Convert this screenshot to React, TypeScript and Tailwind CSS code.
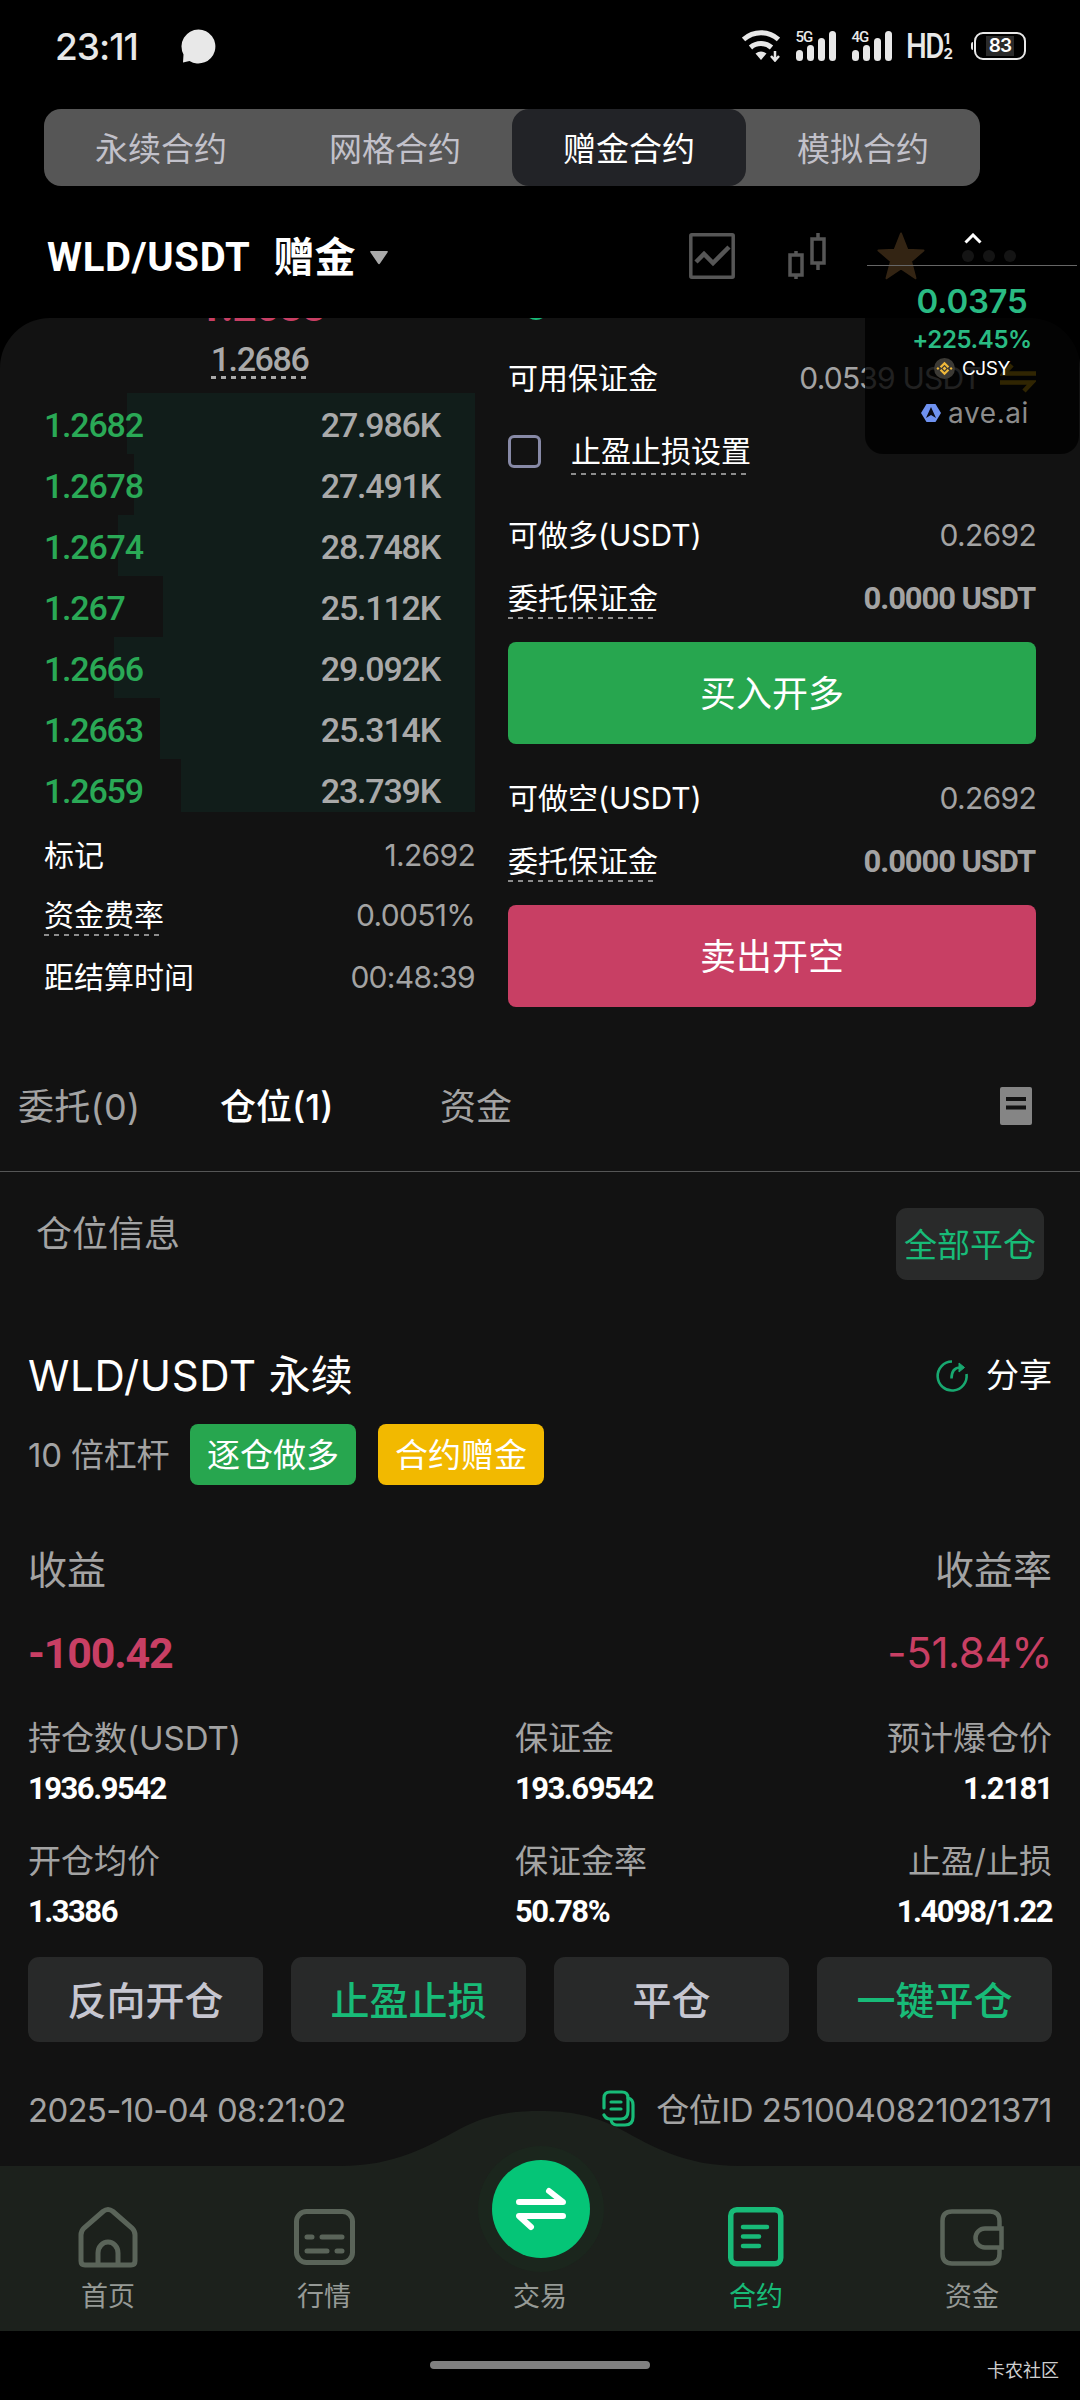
import { useState } from 'react'
import type { ReactNode } from 'react'

const modes = ['永续合约', '网格合约', '赠金合约', '模拟合约']

const bids = [
  { price: '1.2682', amount: '27.986K', bar: 348 },
  { price: '1.2678', amount: '27.491K', bar: 341 },
  { price: '1.2674', amount: '28.748K', bar: 357 },
  { price: '1.267', amount: '25.112K', bar: 312 },
  { price: '1.2666', amount: '29.092K', bar: 361 },
  { price: '1.2663', amount: '25.314K', bar: 315 },
  { price: '1.2659', amount: '23.739K', bar: 294 },
]

function StatusBar() {
  return (
    <div className="flex h-[109px] items-start justify-between pt-7 pr-[54px] pl-[55px] text-[#e8e8e8]">
      <div className="flex h-9 items-center">
        <span className="w-[126px] text-[37px] leading-none font-medium tracking-[-1px]">23:11</span>
        <svg width="35" height="35" viewBox="0 0 35 35" fill="currentColor">
          <path d="M17.5 .5a17 17 0 1 1-9 31.500L2 33.500l.5-8A17 17 0 0 1 17.500 .5z" />
        </svg>
      </div>
      <div className="flex h-9 items-center">
        <svg width="38" height="32" viewBox="0 0 38 32" fill="none" stroke="currentColor">
          <path d="M1.500 9.500a26 26 0 0 1 35 0" strokeWidth="5" />
          <path d="M8.500 17.500a16 16 0 0 1 21 0" strokeWidth="5" />
          <path d="M13.500 23.500q5.500-4 11 0L19 30z" fill="currentColor" stroke="none" />
          <path d="M33 21v8M29 26l4 4.500 4-4.500" strokeWidth="2.500" />
        </svg>
        <Signal label="5G" className="ml-4" />
        <Signal label="4G" className="ml-4" />
        <div className="ml-[14px] flex h-8 items-center">
          <span className="w-[38px] origin-left scale-x-[.84] font-[Roboto] text-[35px] leading-none font-medium tracking-[-2px]">
            HD
          </span>
          <span className="flex flex-col text-[15px] leading-[15px] font-bold">
            <span>1</span>
            <span>2</span>
          </span>
        </div>
        <span className="ml-[18px] h-2 w-[2px] rounded-l bg-current" />
        <div className="ml-[1px] flex h-7 w-[52px] items-center justify-center rounded-[9px] border-[2.5px] border-current">
          <span className="bg-[#2a2a2a] px-[3px] text-[19px] leading-[20px] font-semibold tracking-[-1px] text-white">83</span>
        </div>
      </div>
    </div>
  )
}

function Signal({ label, className }: { label: string; className: string }) {
  return (
    <div className={`relative h-[30px] w-10 ${className}`}>
      <span className="absolute top-0 left-0 font-[Roboto] text-[15px] leading-[12px] font-medium tracking-[-1px]">{label}</span>
      <svg width="40" height="30" viewBox="0 0 40 30" fill="currentColor">
        <rect x="0" y="19" width="7" height="11" rx="3.500" />
        <rect x="11" y="14" width="7" height="16" rx="3.500" />
        <rect x="22" y="7" width="7" height="23" rx="3.500" />
        <rect x="33" y="0" width="7" height="30" rx="3.500" />
      </svg>
    </div>
  )
}

function Header() {
  return (
    <div className="flex h-[132px] items-start justify-between pr-[64px] pl-[47px]">
      <div className="flex h-[143px] items-center text-white">
        <span className="font-[Roboto] text-[40px] leading-none font-bold tracking-[.7px]">WLD/USDT</span>
        <span className="ml-[23px] text-[41px] leading-none font-bold">赠金</span>
        <svg className="ml-[14px]" width="18" height="14" viewBox="0 0 18 14" fill="#a9a9a9">
          <path d="M1 0h16q1.500 0 .5 1.500l-7.500 11q-1 1.500-2 0L.5 1.500Q-.5 0 1 0z" />
        </svg>
      </div>
      <div className="flex h-[140px] items-center text-[#565656]">
        <svg width="46" height="46" viewBox="0 0 46 46" fill="none" stroke="currentColor" strokeWidth="3.500">
          <rect x="1.800" y="1.800" width="42.400" height="42.400" rx="1" />
          <path d="M7 29l8-8 9 9 16-16" strokeWidth="4.500" />
        </svg>
        <svg className="ml-[53px]" width="38" height="46" viewBox="0 0 38 46" fill="none" stroke="currentColor" strokeWidth="3.500">
          <rect x="2" y="22" width="12" height="20" />
          <path d="M8 18v4M8 42v4M30 0v6M30 30v7" />
          <rect x="24" y="6" width="12" height="24" />
        </svg>
        <svg className="ml-[51px]" width="48" height="48" viewBox="0 0 48 48" fill="#ffb45f" stroke="#ffb45f" strokeWidth="2" strokeLinejoin="round">
          <path d="M24 1.500l6.300 16.200 16.200.8-12.500 10.700 4.500 17L24 36.500 9.500 46.200l4.500-17L1.500 18.500l16.200-.8z" />
        </svg>
        <div className="ml-[37px] flex gap-[9px]">
          <span className="size-3 rounded-full bg-[#646464]" />
          <span className="size-3 rounded-full bg-[#646464]" />
          <span className="size-3 rounded-full bg-[#646464]" />
        </div>
      </div>
    </div>
  )
}

function Dashed({ children }: { children: ReactNode }) {
  return (
    <span className="relative">
      {children}
      <span className="absolute inset-x-0 -bottom-[6px] h-[2px] bg-[repeating-linear-gradient(90deg,#8c8c8c_0_5px,transparent_5px_10px)]" />
    </span>
  )
}

function InfoRow({ label, value, dashed, className }: { label: string; value: string; dashed?: boolean; className: string }) {
  return (
    <div className={`flex items-center justify-between text-[30px] leading-none text-white ${className}`}>
      {dashed ? <Dashed>{label}</Dashed> : <span>{label}</span>}
      <span className="tracking-[-.7px] text-[#a3a3a3]">{value}</span>
    </div>
  )
}

function OrderBook() {
  return (
    <div className="w-[431px]">
      <div className="flex h-[75px] flex-col items-center">
        <div className="flex h-[5px] items-end overflow-hidden">
          <span className="-mb-[5px] ml-1 font-[Roboto] text-[42px] leading-none font-bold tracking-[-1px] text-[#c83f64]">1.2688</span>
        </div>
        <span className="relative mt-[19px] font-[Roboto] text-[34px] leading-none font-medium tracking-[-1.4px] text-[#a9a9a9]">
          1.2686
          <span className="absolute inset-x-0 -bottom-[3px] h-[3px] bg-[repeating-linear-gradient(90deg,#a9a9a9_0_5px,transparent_5px_10px)]" />
        </span>
      </div>
      <div className="h-[419px] overflow-hidden">
        {bids.map((bid) => (
          <div key={bid.price} className="relative h-[61px] font-[Roboto] text-[34px] font-medium tracking-[-1.2px]">
            <div className="absolute inset-y-0 right-0 bg-[#111d1a]" style={{ width: bid.bar }} />
            <div className="relative flex h-[64px] items-center justify-between pr-[35px] leading-none">
              <span className="text-[#2aa956]">{bid.price}</span>
              <span className="text-[#a9a9a9]">{bid.amount}</span>
            </div>
          </div>
        ))}
      </div>
      <InfoRow label="标记" value="1.2692" className="mt-[13px] h-[60px]" />
      <InfoRow label="资金费率" value="0.0051%" dashed className="h-[60px]" />
      <InfoRow label="距结算时间" value="00:48:39" className="h-[63px]" />
    </div>
  )
}

function OrderForm() {
  return (
    <div className="ml-[33px] w-[528px]">
      <div className="h-[30px]">
        <div className="ml-4 h-[2px] w-6 overflow-hidden">
          <div className="-mt-[22px] size-6 rounded-full bg-[#18bb78]" />
        </div>
      </div>
      <div className="flex h-[60px] items-center text-[30px] leading-none text-white">
        <span>可用保证金</span>
        <span className="ml-auto tracking-[-.8px] text-[#a3a3a3]">0.0539 USDT</span>
        <svg className="ml-[19px]" width="36" height="30" viewBox="0 0 36 30" fill="none" stroke="#f0b90b" strokeWidth="4.500">
          <path d="M36 10.500H4L12 2M0 19.500h32L24 28" />
        </svg>
      </div>
      <div className="mt-[13px] flex h-[60px] items-center text-[30px] leading-none text-white">
        <span className="size-[33px] rounded-[6px] border-[3px] border-[#8789a6]" />
        <span className="ml-[30px]">
          <Dashed>止盈止损设置</Dashed>
        </span>
      </div>
      <InfoRow label="可做多(USDT)" value="0.2692" className="mt-[24px] h-[60px]" />
      <MarginRow />
      <button className="mt-[14px] flex h-[102px] w-full items-center justify-center rounded-[8px] bg-[#27a64f] pt-[2px] text-[36px] leading-none text-white">
        买入开多
      </button>
      <InfoRow label="可做空(USDT)" value="0.2692" className="mt-[24px] h-[60px]" />
      <MarginRow />
      <button className="mt-[14px] flex h-[102px] w-full items-center justify-center rounded-[8px] bg-[#c83f64] pt-[2px] text-[36px] leading-none text-white">
        卖出开空
      </button>
    </div>
  )
}

function MarginRow() {
  return (
    <div className="mt-[3px] flex h-[60px] items-center justify-between text-[30px] leading-none text-white">
      <Dashed>委托保证金</Dashed>
      <span className="mr-[1px] font-[Roboto] text-[31px] font-bold tracking-[-1.1px] text-[#a3a3a3]">0.0000 USDT</span>
    </div>
  )
}

function PositionTabs() {
  return (
    <div className="flex h-[132px] items-center border-b border-[#555656] pt-[2px] pr-12 pl-[18px] text-[36px] leading-none text-[#a3a3a3]">
      <span className="w-[202px] tracking-[.3px]">委托(0)</span>
      <span className="w-[220px] font-medium text-white">仓位(1)</span>
      <span>资金</span>
      <svg className="ml-auto -mt-[2px]" width="32" height="38" viewBox="0 0 32 38">
        <rect width="32" height="38" rx="2" fill="#858585" />
        <path d="M6 12h20M6 20.500h20" stroke="#121212" strokeWidth="4" />
      </svg>
    </div>
  )
}

function Stat({ label, value, className = '' }: { label: string; value: string; className?: string }) {
  return (
    <div className={`flex flex-col ${className}`}>
      <span className="flex h-[50px] items-center text-[33px] leading-none text-[#a3a3a3]">{label}</span>
      <span className="flex h-[50px] items-center font-[Roboto] text-[31px] leading-none font-bold tracking-[-1.5px] text-white">{value}</span>
    </div>
  )
}

function PositionCard() {
  return (
    <div className="px-7">
      <div className="flex h-[60px] items-center justify-between pt-[1px] leading-none text-white">
        <span className="text-[42px]">
          <span className="tracking-[.7px]">WLD/USDT</span> 永续
        </span>
        <div className="flex items-center text-[33px]">
          <svg className="mr-[17px]" width="34" height="34" viewBox="0 0 34 34" fill="none" stroke="#18a870" strokeWidth="2.600">
            <path d="M17 2.500A14.500 14.500 0 1 0 31.500 15" />
            <path d="M16.500 19.500c0-7 3-11 9-11" />
            <path d="M24 4l5.500 4.500L24 13z" fill="#18a870" strokeWidth="1" />
          </svg>
          <span>分享</span>
        </div>
      </div>
      <div className="mt-[19px] flex h-[61px] items-center text-[33px] leading-none text-white">
        <span className="w-[162px] pt-[1px] tracking-[-.2px] text-[#a3a3a3]">10 倍杠杆</span>
        <span className="flex h-[61px] w-[166px] items-center justify-center rounded-[8px] bg-[#27a64f] pt-[2px]">逐仓做多</span>
        <span className="ml-[22px] flex h-[61px] w-[166px] items-center justify-center rounded-[8px] bg-[#f2b900] pt-[2px]">合约赠金</span>
      </div>
      <div className="mt-[54px] flex h-[60px] items-center justify-between text-[39px] leading-none text-[#a3a3a3]">
        <span>收益</span>
        <span>收益率</span>
      </div>
      <div className="mt-[24px] flex h-[60px] items-center justify-between font-[Roboto] text-[43px] leading-none text-[#c83f64]">
        <span className="font-bold tracking-[-1.2px]">-100.42</span>
        <span className="font-[Inter] text-[42px] tracking-[-.4px]">-51.84%</span>
      </div>
      <div className="mt-[30px] grid grid-cols-[487px_1fr_auto]">
        <Stat label="持仓数(USDT)" value="1936.9542" />
        <Stat label="保证金" value="193.69542" />
        <Stat label="预计爆仓价" value="1.2181" className="items-end" />
      </div>
      <div className="mt-[23px] grid grid-cols-[487px_1fr_auto]">
        <Stat label="开仓均价" value="1.3386" />
        <Stat label="保证金率" value="50.78%" />
        <Stat label="止盈/止损" value="1.4098/1.22" className="items-end" />
      </div>
      <div className="mt-[21px] grid grid-cols-4 gap-7 text-[39px] leading-none font-medium text-[#c6c6d0]">
        <button className="h-[85px] rounded-[11px] bg-[#282929] pt-[2px]">反向开仓</button>
        <button className="h-[85px] rounded-[11px] bg-[#282929] pt-[2px] text-[#18bb78]">止盈止损</button>
        <button className="h-[85px] rounded-[11px] bg-[#282929] pt-[2px]">平仓</button>
        <button className="h-[85px] rounded-[11px] bg-[#282929] pt-[2px] text-[#18bb78]">一键平仓</button>
      </div>
      <div className="mt-[38px] flex h-[60px] items-center text-[33px] leading-none text-[#a3a3a3]">
        <span className="tracking-[-.75px]">2025-10-04 08:21:02</span>
        <svg className="-mt-1 ml-auto" width="33" height="37" viewBox="0 0 33 37" fill="none" stroke="#18bb78" strokeWidth="3.200" strokeLinecap="round">
          <path d="M2 18V8q0-6 6-6h12q6 0 6 6v13q0 8-7 8H8q-4 0-6-4" />
          <path d="M26 8q5 1 5 7v12q0 8-8 8h-8q-5 0-6-5" />
          <path d="M9 12h10M9 19h10" />
        </svg>
        <span className="ml-[21px] tracking-[-.5px]">仓位ID 2510040821021371</span>
      </div>
    </div>
  )
}

function NavItem({ label, active, children }: { label: string; active?: boolean; children: ReactNode }) {
  return (
    <div className={`flex flex-1 flex-col items-center ${active ? 'text-[#18bb78]' : 'text-[#5a6459]'}`}>
      <div className="mt-[40px] flex h-[62px] items-center">{children}</div>
      <span className={`mt-[15px] text-[27px] leading-none ${active ? '' : 'text-[#969a96]'}`}>{label}</span>
    </div>
  )
}

function BottomNav() {
  return (
    <div className="relative flex h-[165px] bg-[#1c211c]">
      <svg className="absolute -top-[56px] left-[340px]" width="400" height="57" viewBox="0 0 400 57" fill="#1c211c">
        <path d="M0 57V56C56 56 88 36 118 20 146 5 170 1 200 1s54 4 82 19c30 16 62 36 118 36v1z" />
      </svg>
      <NavItem label="首页">
        <svg width="60" height="62" viewBox="0 0 60 62" fill="none" stroke="currentColor" strokeWidth="5">
          <path d="M3 29q0-4 3-7L25 5.500q5-4 10 0L54 22q3 3 3 7v26q0 4-4 4H7q-4 0-4-4z" />
          <path d="M20 59V47a10 11 0 0 1 20 0v12" />
        </svg>
      </NavItem>
      <NavItem label="行情">
        <svg width="61" height="56" viewBox="0 0 61 56" fill="none" stroke="currentColor" strokeWidth="5">
          <rect x="2.500" y="2.500" width="56" height="51" rx="10" />
          <path d="M13 28h5M28 28h20M13 42h20M43 42h5" strokeLinecap="round" />
        </svg>
      </NavItem>
      <div className="relative flex flex-1 flex-col items-center">
        <div className="-mt-[20px] ml-[2px] flex size-[126px] shrink-0 items-center justify-center rounded-full bg-[#1b261d]">
          <div className="flex size-[98px] items-center justify-center rounded-full bg-[#05c577]">
            <svg width="52" height="46" viewBox="0 0 52 46" fill="none" stroke="#fff" strokeWidth="6" strokeLinecap="round" strokeLinejoin="round">
              <path d="M4 16h44L34 5M48 30H4l12 11" />
            </svg>
          </div>
        </div>
        <span className="mt-[11px] text-[27px] leading-none text-[#969a96]">交易</span>
      </div>
      <NavItem label="合约" active>
        <svg width="56" height="60" viewBox="0 0 56 60" fill="none" stroke="currentColor" strokeWidth="5.500">
          <rect x="2.750" y="2.750" width="50" height="54" rx="6" />
          <path d="M15 20h24M15 29.500h16M15 39h16" strokeWidth="4.500" strokeLinecap="round" />
        </svg>
      </NavItem>
      <NavItem label="资金">
        <svg width="64" height="57" viewBox="0 0 64 57" fill="none" stroke="currentColor" strokeWidth="4.500">
          <path d="M59.500 19v-7q0-9.500-9.500-9.500H12Q2.500 2.500 2.500 12v33q0 9.500 9.500 9.500h38q9.500 0 9.500-9.500v-6" />
          <path d="M61.500 19.500H45a9.500 9.500 0 0 0 0 19h16.500z" />
        </svg>
      </NavItem>
    </div>
  )
}

function PriceWidget() {
  return (
    <div className="absolute top-[225px] left-[865px] flex h-[229px] w-[214px] flex-col items-center rounded-[18px] bg-black/80">
      <svg className="mt-[8px] ml-[2px]" width="18" height="11" viewBox="0 0 18 11" fill="none" stroke="#fff" strokeWidth="3">
        <path d="M1.500 9.500L9 2l7.500 7.500" />
      </svg>
      <div className="mt-[21px] h-px w-[210px] bg-[#666]" />
      <span className="mt-[19px] text-[33px] leading-none font-semibold tracking-[-.3px] text-[#2abb83]">0.0375</span>
      <span className="mt-[10px] text-[24px] leading-none font-semibold tracking-[-.4px] text-[#2abb83]">+225.45%</span>
      <div className="mt-[6px] flex items-center">
        <svg width="21" height="21" viewBox="0 0 24 24">
          <circle cx="12" cy="12" r="12" fill="#3c3a35" />
          <path d="M7.500 10.500L12 6l4.500 4.500M7.500 13.500L12 18l4.500-4.500" fill="none" stroke="#f0b93a" strokeWidth="2.600" />
          <path d="M12 9.800l2.200 2.200-2.200 2.200L9.800 12zM4.500 10.300L6.200 12l-1.700 1.700L2.800 12zM19.500 10.300l1.700 1.700-1.700 1.700-1.700-1.700z" fill="#f0b93a" />
        </svg>
        <span className="ml-[7px] text-[19px] leading-none tracking-[-.4px] text-white">CJSY</span>
      </div>
      <div className="mt-[20px] ml-[6px] flex items-center text-[#8b8b8b]">
        <svg width="20" height="18" viewBox="0 0 20 18">
          <path d="M5.500 0h9L20 9l-5.500 9h-9L0 9z" fill="#6f92f0" />
          <path d="M10 3l5 11-5-3-5 3z" fill="#0a0a14" />
        </svg>
        <span className="ml-[7px] text-[28px] leading-none tracking-[.6px]">ave.ai</span>
      </div>
    </div>
  )
}

export default function App() {
  const [mode, setMode] = useState('赠金合约')

  return (
    <main className="relative flex h-[2400px] w-[1080px] flex-col overflow-hidden bg-black font-['Inter','Noto_Sans_CJK_SC',sans-serif]">
      <StatusBar />
      <div className="ml-11 flex h-[77px] w-[936px] shrink-0 rounded-[17px] bg-[#565656] text-[33px] leading-none">
        {modes.map((m) => (
          <button
            key={m}
            onClick={() => setMode(m)}
            className={`flex-1 rounded-[17px] pt-[3px] ${m === mode ? 'bg-[#222327] text-white' : 'text-[#c2c1ca]'}`}
          >
            {m}
          </button>
        ))}
      </div>
      <Header />
      <section className="h-[1848px] shrink-0 overflow-hidden rounded-t-[50px] bg-[#121212]">
        <div className="flex h-[722px] pl-11">
          <OrderBook />
          <OrderForm />
        </div>
        <PositionTabs />
        <div className="flex h-[173px] justify-between pt-9 pr-9 pl-9">
          <span className="mt-[8px] text-[36px] leading-none text-[#a3a3a3]">仓位信息</span>
          <button className="flex h-[72px] w-[148px] items-center justify-center rounded-[11px] bg-[#292a2a] pt-[2px] text-[33px] leading-none text-[#18bb78]">
            全部平仓
          </button>
        </div>
        <PositionCard />
      </section>
      <BottomNav />
      <footer className="relative flex h-[69px] items-center justify-center">
        <div className="h-2 w-[220px] -translate-y-[1px] rounded-full bg-[#808080]" />
        <span className="absolute top-[31px] right-[21px] text-[18px] leading-none text-[#cfcfcf]">卡农社区</span>
      </footer>
      <PriceWidget />
    </main>
  )
}
